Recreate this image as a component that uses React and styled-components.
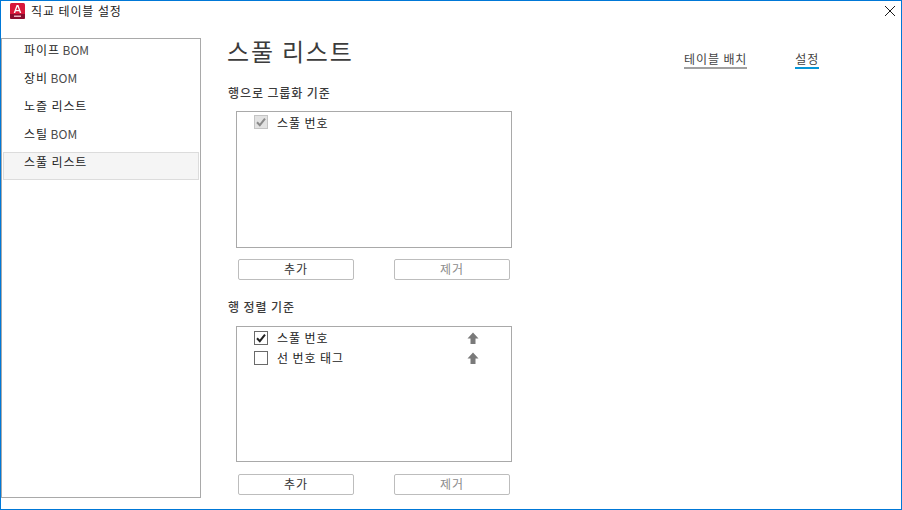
import React from 'react';
import styled, { createGlobalStyle } from 'styled-components';

const GlobalStyle = createGlobalStyle`
  html, body {
    margin: 0;
    padding: 0;
    background: #fff;
  }
  body {
    font-family: "Noto Sans CJK KR", "Liberation Sans", sans-serif;
    font-size: 12px;
    color: #1a1a1a;
    letter-spacing: 0.9px;
  }
`;

const Window = styled.div`
  box-sizing: border-box;
  width: 902px;
  height: 510px;
  border: 1px solid #0078d7;
  display: flex;
  flex-direction: column;
  overflow: hidden;
  background: #fff;
`;

const TitleBar = styled.div`
  box-sizing: border-box;
  height: 37px;
  flex: none;
  display: flex;
  align-items: flex-start;
  padding: 2px 3px 0 9px;
  gap: 5px;
`;

const TitleText = styled.span`
  font-size: 12px;
  line-height: 16px;
  color: #222;
  flex: 1;
`;

const CloseButton = styled.div`
  width: 16px;
  height: 16px;
`;

const Body = styled.div`
  flex: 1;
  display: flex;
`;

const Sidebar = styled.ul`
  box-sizing: border-box;
  list-style: none;
  margin: 0;
  padding: 1px 1px 0;
  width: 200px;
  height: 460px;
  border: 1px solid #a9a9a9;
  flex: none;
`;

const SidebarItem = styled.li`
  box-sizing: border-box;
  height: 28px;
  padding-left: 20px;
  padding-top: 1px;
  font-size: 12px;
  line-height: 16px;
  color: #222;
  background: ${({ $selected }) => ($selected ? '#f5f5f5' : 'transparent')};
  border: 1px solid ${({ $selected }) => ($selected ? '#dcdcdc' : 'transparent')};
`;

const Latin = styled.span`
  letter-spacing: 0;
  color: #4a4a4a;
`;

const Main = styled.div`
  flex: 1;
  display: flex;
  padding-left: 26px;
`;

const Column = styled.div`
  width: 286px;
  flex: none;
`;

const Heading = styled.h1`
  margin: 0;
  height: 36px;
  font-size: 24px;
  font-weight: 400;
  line-height: 26px;
  letter-spacing: 1.8px;
  color: #3c3c3c;
`;

const SectionLabel = styled.div`
  height: 18px;
  margin-top: ${({ $first }) => ($first ? '11px' : '19px')};
  padding-left: 1px;
  font-size: 12px;
  line-height: 16px;
  font-weight: 500;
  color: #3c3c3c;
`;

const ListBox = styled.div`
  box-sizing: border-box;
  width: 276px;
  height: ${({ $tall }) => ($tall ? '137px' : '136px')};
  margin: ${({ $tall }) => ($tall ? '8px' : '9px')} 0 0 9px;
  border: 1px solid #a9a9a9;
  padding-top: ${({ $tall }) => ($tall ? '0' : '1px')};
`;

const ListRow = styled.div`
  height: 20px;
  display: flex;
  align-items: center;
  padding-left: 17px;
  font-size: 12px;
  color: #222;
`;

const CheckBox = styled.span`
  box-sizing: border-box;
  width: 14px;
  height: 14px;
  flex: none;
  border: 1px solid ${({ $disabled }) => ($disabled ? '#c4c4c4' : '#6a6a6a')};
  background: ${({ $disabled }) => ($disabled ? '#e2e2e2' : '#fff')};
  display: flex;
  align-items: center;
  justify-content: center;
`;

const RowLabel = styled.span`
  margin-left: 9px;
  padding-top: ${({ $low }) => ($low ? '2px' : '0')};
  line-height: 16px;
  width: 190px;
`;

const ArrowSlot = styled.span`
  width: 12px;
  height: 12px;
  flex: none;
  display: flex;
`;

const ButtonRow = styled.div`
  display: flex;
  gap: 40px;
  margin: ${({ $low }) => ($low ? '12px' : '11px')} 0 0 11px;
`;

const ActionButton = styled.div`
  box-sizing: border-box;
  width: 116px;
  height: 21px;
  border: 1px solid #bdbdbd;
  border-radius: 2px;
  text-align: center;
  font-size: 12px;
  line-height: 17px;
  color: ${({ $disabled }) => ($disabled ? '#8c8c8c' : '#333')};
`;

const Tabs = styled.div`
  display: flex;
  gap: 48px;
  padding: 13px 0 0 171px;
  align-items: flex-start;
`;

const Tab = styled.div`
  font-size: 12px;
  line-height: 16px;
  color: #444;
  border-bottom: 2px solid ${({ $active }) => ($active ? '#0696d7' : '#a0a0a0')};
`;

const Check = ({ color }) => (
  <svg width="12" height="12" viewBox="0 0 12 12">
    <path d="M2 6.2 L4.8 9.2 L10 2.6" fill="none" stroke={color} strokeWidth="2" />
  </svg>
);

const AppIcon = () => (
  <svg width="16" height="16" viewBox="0 0 16 16">
    <rect x="0" y="0" width="15" height="16" rx="1.5" fill="#d8173a" />
    <path d="M0 11 H15 V14.5 A1.5 1.5 0 0 1 13.5 16 H1.5 A1.5 1.5 0 0 1 0 14.5 Z" fill="#8a0c2e" />
    <path d="M3.7 10 L6.6 2 H8.4 L11.3 10 H9.8 L9.2 8.3 H5.8 L5.2 10 Z M6.2 7.1 H8.8 L7.5 3.5 Z" fill="#fff" fillRule="evenodd" />
    <rect x="4" y="12.5" width="7" height="1.5" fill="#eeb0bd" />
  </svg>
);

const CloseIcon = () => (
  <svg width="16" height="16" viewBox="0 0 16 16">
    <path d="M3 3 L13 13 M13 3 L3 13" stroke="#1a1a1a" strokeWidth="1" fill="none" />
  </svg>
);

const UpArrow = () => (
  <svg width="12" height="12" viewBox="0 0 12 12">
    <path d="M6 0.5 L11.5 6.5 H8.5 V12 H3.5 V6.5 H0.5 Z" fill="#7a7a7a" />
  </svg>
);

const sidebarItems = [
  { name: '파이프', suffix: 'BOM' },
  { name: '장비', suffix: 'BOM' },
  { name: '노즐 리스트' },
  { name: '스틸', suffix: 'BOM' },
  { name: '스풀 리스트' },
];

const App = () => (
  <>
    <GlobalStyle />
    <Window>
      <TitleBar>
        <AppIcon />
        <TitleText>직교 테이블 설정</TitleText>
        <CloseButton><CloseIcon /></CloseButton>
      </TitleBar>
      <Body>
        <Sidebar>
          {sidebarItems.map((item, i) => (
            <SidebarItem key={item.name} $selected={i === 4}>
              {item.name}{item.suffix && <Latin> {item.suffix}</Latin>}
            </SidebarItem>
          ))}
        </Sidebar>
        <Main>
          <Column>
            <Heading>스풀 리스트</Heading>
            <SectionLabel $first>행으로 그룹화 기준</SectionLabel>
            <ListBox $tall>
              <ListRow>
                <CheckBox $disabled><Check color="#8a8a8a" /></CheckBox>
                <RowLabel $low>스풀 번호</RowLabel>
              </ListRow>
            </ListBox>
            <ButtonRow>
              <ActionButton>추가</ActionButton>
              <ActionButton $disabled>제거</ActionButton>
            </ButtonRow>
            <SectionLabel>행 정렬 기준</SectionLabel>
            <ListBox>
              <ListRow>
                <CheckBox><Check color="#222" /></CheckBox>
                <RowLabel>스풀 번호</RowLabel>
                <ArrowSlot><UpArrow /></ArrowSlot>
              </ListRow>
              <ListRow>
                <CheckBox />
                <RowLabel>선 번호 태그</RowLabel>
                <ArrowSlot><UpArrow /></ArrowSlot>
              </ListRow>
            </ListBox>
            <ButtonRow $low>
              <ActionButton>추가</ActionButton>
              <ActionButton $disabled>제거</ActionButton>
            </ButtonRow>
          </Column>
          <Tabs>
            <Tab>테이블 배치</Tab>
            <Tab $active>설정</Tab>
          </Tabs>
        </Main>
      </Body>
    </Window>
  </>
);

export default App;
